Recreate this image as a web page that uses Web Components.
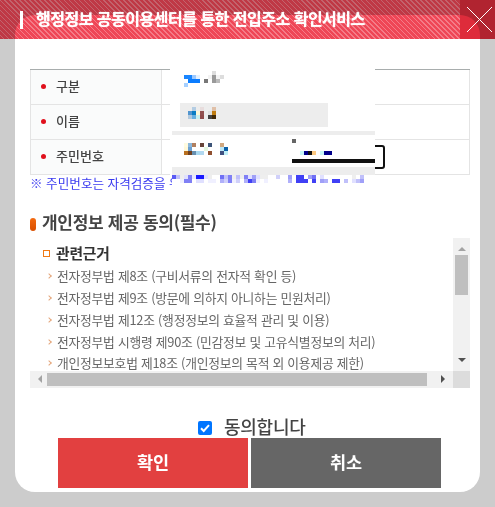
<!DOCTYPE html>
<html lang="ko"><head><meta charset="utf-8"><style>
html,body{margin:0;padding:0;height:507px;overflow:hidden;background:#ccc}
body{font-family:"Noto Sans CJK KR","Noto Sans",sans-serif}
</style></head><body>
<pop-up>
  <mosaic-mask slot="mask"></mosaic-mask>
  <info-table slot="table"></info-table>
  <p slot="note">※ 주민번호는 자격검증을 위</p>
  <consent-box slot="consent"></consent-box>
</pop-up>
<script>
function def(name,html,setup){customElements.define(name,class extends HTMLElement{constructor(){super();this.attachShadow({mode:'open'}).innerHTML=html;if(setup)setup(this.shadowRoot)}})}
const F='"Noto Sans CJK KR","Noto Sans",sans-serif';
def('pop-up',`<style>
:host{display:block;width:495px;height:507px;position:relative;overflow:hidden;font-family:${F}}
.card{box-sizing:border-box;width:465px;height:477px;margin:15px 0 0 15px;background:#fff;border-radius:20px;padding:54px 10px 0 15px;display:flex;flex-direction:column}
.head{position:absolute;left:0;top:0;width:495px;height:39px;display:flex;align-items:center}
.head::before{content:"";position:absolute;left:0;top:0;bottom:0;right:35px;mix-blend-mode:multiply;background:repeating-linear-gradient(45deg,#ef4656 0 2.4px,#f47c88 2.4px 3.5px)}
.bar{position:relative;width:3px;height:18px;background:#fff;margin:0 13px 0 20px}
.ttl{position:relative;color:#fff;font-size:16px;font-weight:700;letter-spacing:-.5px;text-shadow:0 0 1px rgba(255,255,255,.9);flex:1;line-height:20px;margin-top:-3px;white-space:nowrap}
.x{position:relative;width:35px;height:39px;display:flex}
.x::before{content:"";position:absolute;inset:0;background:#de2c3b;mix-blend-mode:multiply}
.x svg{position:relative}
::slotted([slot=note]){margin:0;font-size:12.6px;line-height:16px;color:#3a3af0;height:19px;white-space:nowrap}
.mask{position:absolute;left:170px;top:60px}
.t2{margin:16px 0 0;font-size:17px;font-weight:700;color:#444;line-height:24px;letter-spacing:-.3px;display:flex;align-items:center;gap:6px}
.dot{width:6px;height:13px;border-radius:3px;background:linear-gradient(#f36a10,#d94f00);transform:translateY(2px)}
.btns{display:flex;gap:3px;margin-left:28px}
.b{width:190px;height:50px;color:#fff;font-size:17.5px;font-weight:700;display:flex;align-items:center;justify-content:center;padding-bottom:4px;box-sizing:border-box}
.agree{display:flex;align-items:center;height:25px;gap:12px;margin:25px 0 0 168px;font-size:18px;font-weight:500;color:#444;letter-spacing:-.25px}
.cb{width:14px;height:14px;border-radius:2px;background:#0075ff;display:flex;align-items:center;justify-content:center;transform:translateY(2px)}
</style>
<div class="card">
  <slot name="table"></slot>
  <slot name="note"></slot>
  <div class="t2"><span class="dot"></span><span>개인정보 제공 동의(필수)</span></div>
  <slot name="consent"></slot>
  <div class="agree"><span class="cb"><svg width="14" height="14" viewBox="0 0 14 14"><path d="M3 7.3l2.7 2.7L11 4.2" fill="none" stroke="#fff" stroke-width="2"/></svg></span><span>동의합니다</span></div>
  <div class="btns"><div class="b" style="background:#e24040">확인</div><div class="b" style="background:#666">취소</div></div>
</div>
<div class="mask"><slot name="mask"></slot></div>
<div class="head"><span class="bar"></span><span class="ttl">행정정보 공동이용센터를 통한 전입주소 확인서비스</span>
<span class="x"><svg width="35" height="39" viewBox="0 0 35 39" shape-rendering="crispEdges"><path d="M7 7l25 25M32 7L7 32" stroke="#fff" stroke-width="1" fill="none"/></svg></span></div>`);
def('info-table',`<style>
:host{display:block;border-top:1px solid #a8adad;font-size:13px;font-weight:500;color:#444}
.r{display:grid;grid-template-columns:131px 1fr;height:35px;border-bottom:1px solid #e4e4e4;box-sizing:border-box;border-left:1px solid #e4e4e4;border-right:1px solid #e4e4e4}
.l{background:#fafbfb;border-right:1px solid #e4e4e4;display:flex;align-items:center;padding:0 0 3px 10px;gap:10px}
.s{width:5px;height:5px;border-radius:50%;background:#e0101c;transform:translateY(1px)}
</style>
<div class="r"><div class="l"><span class="s"></span>구분</div><div></div></div>
<div class="r"><div class="l"><span class="s"></span>이름</div><div></div></div>
<div class="r"><div class="l"><span class="s"></span>주민번호</div><div></div></div>`);
def('consent-box',`<style>
:host{display:block;margin-top:4px;height:150px;box-sizing:border-box;font-size:12.8px;color:#666;overflow:hidden}
.wrap{display:grid;grid-template-columns:1fr 17px;grid-template-rows:1fr 17px;height:150px}
.c{padding:3px 0 0 17px;overflow:hidden}
h4{margin:0 0 0 -4px;font-size:14.8px;font-weight:700;color:#333;line-height:24px;height:24px;display:flex;align-items:center;gap:6px;letter-spacing:-.2px}
h4 i{width:5px;height:5px;border:1.5px solid #f07a14;display:block}
.i{height:22px;line-height:22px;display:flex;align-items:center;gap:6px;white-space:nowrap;letter-spacing:-.25px}
.i:last-child{height:18px;line-height:18px;margin-top:1px}
.i:before{content:"";width:3px;height:3px;border-top:1.5px solid #e4a67c;border-right:1.5px solid #e4a67c;transform:rotate(45deg)}
.v,.h{background:#f1f1f1;position:relative}
.v{grid-row:1/2;grid-column:2}.h{grid-column:1;grid-row:2;display:flex;align-items:center;padding:0 26px 0 17px}
.corner{background:#dcdcdc}
.vt{position:absolute;left:2px;top:17px;width:13px;height:40px;background:#bfbfbf}
.ht{height:13px;width:100%;background:#bfbfbf}
.a{position:absolute;width:0;height:0;border:4px solid transparent}
</style>
<div class="wrap"><div class="c"><h4><i></i>관련근거</h4>
<div class="i">전자정부법 제8조 (구비서류의 전자적 확인 등)</div>
<div class="i">전자정부법 제9조 (방문에 의하지 아니하는 민원처리)</div>
<div class="i">전자정부법 제12조 (행정정보의 효율적 관리 및 이용)</div>
<div class="i">전자정부법 시행령 제90조 (민감정보 및 고유식별정보의 처리)</div>
<div class="i">개인정보보호법 제18조 (개인정보의 목적 외 이용제공 제한)</div></div>
<div class="v"><span class="a" style="left:5px;top:5px;border-bottom-color:#a3a3a3"></span><span class="vt"></span><span class="a" style="left:5px;bottom:5px;border-top-color:#505050"></span></div>
<div class="h"><span class="a" style="left:4px;top:4px;border-right-color:#a3a3a3"></span><span class="ht"></span><span class="a" style="right:4px;top:4px;border-left-color:#505050"></span></div>
<div class="corner"></div></div>`);
def('mosaic-mask',`<style>:host{display:block;width:205px;height:120px}svg{display:block;overflow:visible}</style><svg id="s" width="215" height="130" viewBox="0 0 215 130" shape-rendering="crispEdges"></svg>`,r=>{
 let h='<rect x="0" y="0" width="205" height="115" fill="#fff"/><rect x="2" y="115" width="240" height="16" fill="#fff"/><rect x="10" y="43" width="148" height="24" fill="#ededed"/><rect x="2" y="71" width="203" height="4" fill="#ededed"/><rect x="2" y="107" width="203" height="8" fill="#ededed"/>';
 h+='<path d="M205 86h7q2 0 2 2v18q0 2-2 2h-7" fill="none" stroke="#111" stroke-width="2" shape-rendering="auto"/><rect x="122" y="99" width="83" height="4" fill="#111"/>';
 const px=[[14,15,'#1a86ff'],[18,15,'#1a86ff'],[22,15,'#9cc9ff'],[26,15,'#e5f1ff'],[18,19,'#0a7cff'],[22,19,'#0a7cff'],[26,19,'#0a7cff'],[14,23,'#a6d0ff'],[34,19,'#777'],[42,11,'#ddd'],[38,15,'#f3f3f3'],[42,15,'#999'],[46,15,'#f3f3f3'],[50,15,'#ddd'],[42,19,'#999'],[46,19,'#bbb'],
 [22,47,'#b4cde3'],[30,47,'#e8dddd'],[42,47,'#e0c0a8'],[18,51,'#5295cf'],[22,51,'#0a7cc4'],[26,51,'#fbf8d8'],[30,51,'#925050'],[38,51,'#e0e0e0'],[42,51,'#c07c10'],[18,55,'#b1c8dc'],[22,55,'#67afe0'],[26,55,'#c8f0f0'],[30,55,'#8e4a4a'],[38,55,'#444'],[42,55,'#402808'],
 [14,83,'#fffbe0'],[18,83,'#8cb8dc'],[22,83,'#b08060'],[30,83,'#664438'],[38,83,'#3c5478'],[50,83,'#d0a880'],[14,87,'#fff8d8'],[18,87,'#6ca0d0'],[34,87,'#e4f8e0'],[50,87,'#bce8f8'],[54,87,'#0a60a8'],[14,91,'#b87020'],[18,91,'#704020'],[22,91,'#6890b0'],[26,91,'#a8d8f0'],[30,91,'#b0d8f0'],[38,91,'#905030'],[50,91,'#405080'],[54,91,'#c0f0f8'],
 [122,79,'#666'],[130,91,'#c8f8f8'],[134,91,'#00008b'],[138,91,'#111'],[142,91,'#fcc880'],[150,91,'#c8f8f8'],[154,91,'#00008b'],[158,91,'#00008b']];
 px.forEach(p=>h+=`<rect x="${p[0]}" y="${p[1]}" width="4" height="4" fill="${p[2]}"/>`);
 const r1={36:'5a5af5',48:'c0c0fa',60:'eee',72:'e0e0fd',84:'8080f5',96:'e8e8fd',108:'1a1aff',120:'1a1aff',132:'e0e0ff',144:'eee',180:'7070f5',192:'c0c0fa',204:'8080f5',216:'eee',228:'c0c0fa',240:'eee',252:'8080f5',264:'e0e0ff',276:'a0a0f8',288:'e0e0ff',300:'eee',312:'eee',348:'d0d0fa',384:'a0a0f8',408:'4040f5',420:'4040f5',444:'a0a0f8',456:'7070f5',480:'e0e0ff',576:'eee',600:'c0c0fa'};
 const r2={60:'f0f0ff',72:'8080f5',84:'8080f5',108:'e0e0ff',120:'e0e0ff',144:'f0f0ff',156:'f0f0ff',180:'b0b0fa',192:'d0d0fa',204:'8080f5',216:'f0f0ff',228:'d0d0fa',252:'b0b0fa',264:'4040f5',276:'8080f5',288:'f0f0ff',312:'f0f0ff',384:'b0b0fa',408:'4040f5',420:'4040f5',432:'4040f5',456:'4040f5',480:'a0a0f8',492:'b0b0fa',516:'4040f5',528:'4040f5',552:'c0c0fa',576:'e0e0ff',588:'c0c0fa',600:'a0a0f8'};
 [[r1,115],[r2,119]].forEach(([o,y])=>{for(const z in o)h+=`<rect x="${z/3-10}" y="${y}" width="4" height="4" fill="#${o[z]}"/>`});
 r.getElementById('s').innerHTML=h;
});
</script></body></html>
